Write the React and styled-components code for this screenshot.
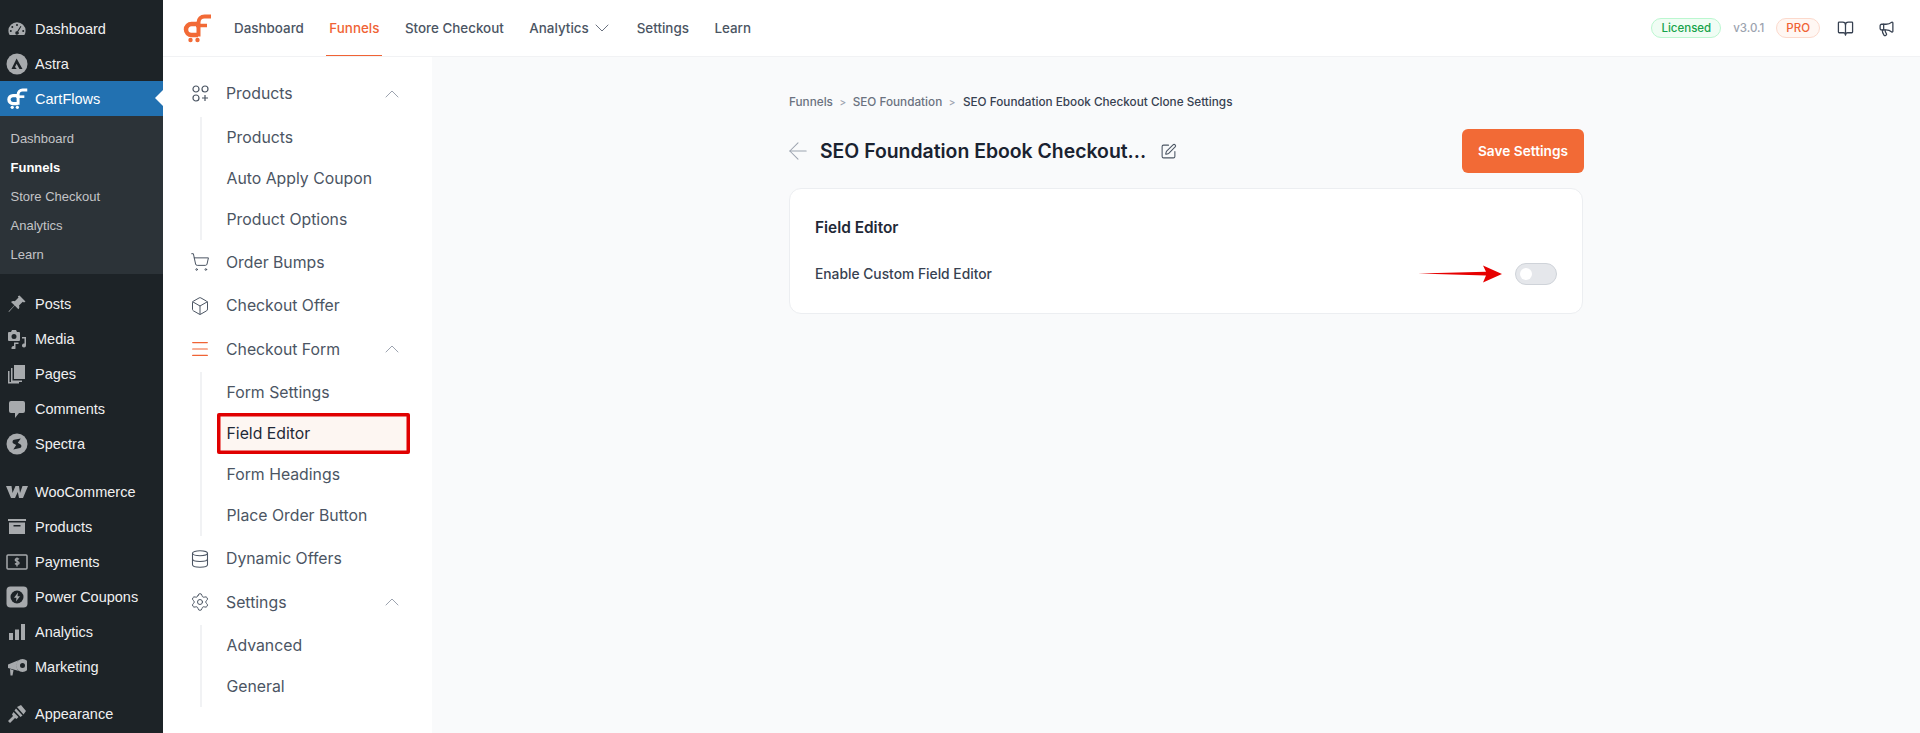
import React from 'react';
import styled, { createGlobalStyle } from 'styled-components';
import {
  ArrowLeft, BookOpen, Box, ChevronDown, ChevronUp, Database, Menu, Megaphone,
  Settings as SettingsIcon, ShoppingCart, SquarePen,
} from 'lucide-react';

const GlobalStyle = createGlobalStyle`
  html, body { margin: 0; padding: 0; height: 100%; background: #fff; }
  #root { height: 100%; }
  * { box-sizing: border-box; }
`;

const UI_FONT = `'Inter', 'Noto Sans', sans-serif`;

const Page = styled.div`
  display: flex;
  width: 1920px;
  height: 733px;
  overflow: hidden;
  font-family: ${UI_FONT};
`;

/* wp admin column */
const WpSidebar = styled.nav`
  flex: 0 0 163px;
  background: #1d2327;
  padding-top: 11px;
  font-family: 'Liberation Sans', Arial, sans-serif;
`;

const WpRow = styled.div`
  position: relative;
  display: flex;
  align-items: center;
  height: 35px;
  margin-top: ${(p) => (p.$gap ? '12.5px' : '0')};
  padding-left: 6px;
  gap: 7px;
  font-size: 14.5px;
  color: ${(p) => (p.$active ? '#fff' : '#f0f0f1')};
  background: ${(p) => (p.$active ? '#2271b1' : 'transparent')};

  &::after {
    content: ${(p) => (p.$active ? "''" : 'none')};
    position: absolute;
    right: 0;
    top: 9px;
    border: 8px solid transparent;
    border-right-color: #fff;
    border-left-width: 0;
  }
`;

const WpIconSlot = styled.span`
  display: flex;
  align-items: center;
  justify-content: center;
  width: 22px;
  height: 22px;
  color: ${(p) => (p.$active ? '#fff' : '#a7aaad')};
`;

const WpSubmenu = styled.div`
  background: #2c3338;
  padding: 8px 0 5px;
`;

const WpSubItem = styled.div`
  display: flex;
  align-items: center;
  height: 29px;
  padding-left: 10.5px;
  font-size: 13px;
  font-weight: ${(p) => (p.$current ? 700 : 400)};
  color: ${(p) => (p.$current ? '#fff' : '#c3c4c7')};
`;

/* plugin area */
const Main = styled.div`
  flex: 1;
  display: flex;
  flex-direction: column;
  min-width: 0;
`;

const TopBar = styled.header`
  display: flex;
  align-items: stretch;
  height: 57px;
  padding: 0 25px 0 19px;
  background: #fff;
  border-bottom: 1px solid #f1f2f4;
`;

const LogoLink = styled.a`
  display: flex;
  align-items: center;
  margin-right: 22px;
`;

const TopNav = styled.div`
  display: flex;
  gap: 25.5px;
`;

const TopLink = styled.a`
  display: flex;
  align-items: center;
  gap: 1px;
  padding: 0 ${(p) => (p.$active ? '3px' : '0')};
  margin: 0 ${(p) => (p.$active ? '-3px' : '0')};
  font-size: 13.4px;
  font-weight: 500;
  color: ${(p) => (p.$active ? '#f06335' : '#4b5563')};
  border-bottom: 1px solid ${(p) => (p.$active ? '#f06335' : 'transparent')};
`;

const NavCaret = styled.span`
  display: flex;
  margin-right: -2.5px;
  color: #6b7280;
`;

const TopRight = styled.div`
  display: flex;
  align-items: center;
  margin-left: auto;
`;

const Pill = styled.span`
  display: inline-flex;
  align-items: center;
  height: 20px;
  padding: 0 9px;
  border-radius: 10px;
  font-size: 11.5px;
  font-weight: 500;
  color: ${(p) => (p.$tone === 'green' ? '#16a34a' : '#f06335')};
  background: ${(p) => (p.$tone === 'green' ? '#f0fdf4' : '#fff7f3')};
  border: 1px solid ${(p) => (p.$tone === 'green' ? '#bbf7d0' : '#fcd9cc')};
`;

const Version = styled.span`
  margin: 0 12px;
  font-size: 11.5px;
  font-weight: 500;
  color: #9ca3af;
`;

const TopIcon = styled.span`
  display: flex;
  margin-left: ${(p) => p.$left || 0}px;
  color: #374151;
`;

const Body = styled.div`
  flex: 1;
  display: flex;
  min-height: 0;
`;

const SidePanel = styled.aside`
  flex: 0 0 269px;
  background: #fff;
  padding-top: 15px;
  padding-left: 29px;
`;

const TopItem = styled.div`
  display: flex;
  align-items: center;
  height: 43.5px;
  gap: 18px;
  font-size: 15.8px;
  color: #4b5563;
`;

const ItemIcon = styled.span`
  display: flex;
  justify-content: center;
  width: 16px;
  color: ${(p) => (p.$active ? '#f06335' : '#4b5563')};

  svg {
    flex: none;
  }
`;

const Caret = styled.span`
  display: flex;
  margin-left: auto;
  margin-right: 28px;
  color: #9ca3af;
`;

const SubList = styled.div`
  margin: 1px 0 1px 8px;
  padding-left: 16px;
  border-left: 2px solid #f1f2f4;
`;

const SubItem = styled.div`
  display: flex;
  align-items: center;
  height: 41px;
  margin-left: -1px;
  margin-right: 22px;
  padding-left: 9.5px;
  font-size: 15.8px;
  color: ${(p) => (p.$active ? '#1f2937' : '#4b5563')};
  background: ${(p) => (p.$active ? '#fdf6f2' : 'transparent')};
  box-shadow: ${(p) => (p.$active ? 'inset 0 0 0 3.5px #e00000' : 'none')};
  border-radius: 2px;
`;

const Content = styled.main`
  flex: 1;
  background: #f9fafb;
  padding: 37px 0 0 357px;
`;

const Column = styled.div`
  width: 795px;
`;

const Crumbs = styled.div`
  display: flex;
  align-items: center;
  height: 16px;
  font-size: 11.75px;
  font-weight: 500;
  color: #6b7280;
`;

const CrumbSep = styled.span`
  margin: 0 6.5px;
  color: #9ca3af;
  font-size: 10px;
`;

const CrumbCurrent = styled.span`
  margin-left: 1px;
  color: #374151;
`;

const HeadRow = styled.div`
  display: flex;
  align-items: center;
  height: 44px;
  margin-top: 19px;
`;

const BackArrow = styled.span`
  display: flex;
  margin-left: -5px;
  margin-right: 8px;
  color: #9ca3af;
`;

const Title = styled.h1`
  margin: 0;
  font-size: 19.4px;
  font-weight: 600;
  color: #1a2230;
`;

const EditPen = styled.span`
  display: flex;
  margin-left: 14px;
  color: #4b5563;
`;

const SaveButton = styled.button`
  margin-left: auto;
  width: 122px;
  height: 44px;
  border: 0;
  border-radius: 6px;
  background: #f26a36;
  color: #fff;
  font-family: inherit;
  font-size: 13.7px;
  font-weight: 600;
`;

const Card = styled.section`
  height: 126px;
  margin-top: 15px;
  margin-right: 1px;
  padding: 27px 25px 0;
  background: #fff;
  border: 1px solid #eceef1;
  border-radius: 12px;
`;

const CardTitle = styled.h2`
  margin: 0;
  height: 24px;
  line-height: 24px;
  font-size: 15.4px;
  font-weight: 600;
  color: #1f2937;
`;

const FieldRow = styled.div`
  display: flex;
  align-items: center;
  justify-content: space-between;
  margin-top: 22px;
  height: 24px;
  font-size: 13.8px;
  font-weight: 500;
  color: #374151;
`;

const ToggleWrap = styled.div`
  position: relative;
  display: flex;
`;

const Toggle = styled.span`
  display: flex;
  align-items: center;
  width: 42px;
  height: 22px;
  padding: 0 4px;
  border-radius: 11px;
  background: #e5e7eb;
  border: 1px solid #cfd3d9;
`;

const Knob = styled.span`
  width: 12px;
  height: 12px;
  border-radius: 50%;
  background: #fff;
`;

const AnnotationArrow = styled.svg`
  position: absolute;
  right: 52px;
  top: 0;
`;

const CartFlowsMark = ({ size = 30, color = '#f26a36' }) => (
  <svg width={size} height={size} viewBox="0 0 30 30" fill="none">
    <path d="M15 11H9.500a5.500 5.500 0 0 0 0 11H16" stroke={color} strokeWidth="4.500" />
    <path d="M16.500 23.500V9.500a6 6 0 0 1 6-6H29" stroke={color} strokeWidth="4" />
    <path d="M14 12.500h11" stroke={color} strokeWidth="3.500" />
    <circle cx="8.500" cy="27" r="2.200" fill={color} />
    <circle cx="15.500" cy="27" r="2.200" fill={color} />
  </svg>
);

const wpIcons = {
  dashboard: (
    <svg width="20" height="20" viewBox="0 0 20 20" fill="currentColor">
      <path d="M10 3.200a8.600 8.600 0 0 0-8.600 8.600c0 1.600.4 3 1.200 4.300h14.800a8.500 8.500 0 0 0 1.200-4.300A8.600 8.600 0 0 0 10 3.200zM10 5a1 1 0 1 1 0 2 1 1 0 0 1 0-2zM5.300 7a1 1 0 1 1 0 2 1 1 0 0 1 0-2zM3.800 11a1 1 0 1 1 0 2 1 1 0 0 1 0-2zm12.400 0a1 1 0 1 1 0 2 1 1 0 0 1 0-2zM13.500 7l.9.5-3.200 5.300a1.700 1.700 0 1 1-1-.5z" fillRule="evenodd" />
    </svg>
  ),
  astra: (
    <svg width="22" height="22" viewBox="0 0 22 22">
      <circle cx="11" cy="11" r="10.500" fill="currentColor" />
      <path d="M5.500 16 10.600 5.500 16.500 16h-3l-2.900-5.200L9 14l1.800 2z" fill="#1d2327" />
    </svg>
  ),
  posts: (
    <svg width="20" height="20" viewBox="0 0 20 20" fill="currentColor">
      <path d="M12.500 1.500 18.500 7.500 17 8.500 15.800 7.800 12 11.500c.6 1.400.4 2.800-.6 3.800L7.700 11.600 2 18l-.5-.5 5.900-6.200L4 8c1-1 2.400-1.300 3.800-.7l3.700-3.800-.7-1.200z" />
    </svg>
  ),
  media: (
    <svg width="20" height="20" viewBox="0 0 20 20" fill="currentColor">
      <path d="M2 3h2l1-2h4l1 2h2a1 1 0 0 1 1 1v7a1 1 0 0 1-1 1H2a1 1 0 0 1-1-1V4a1 1 0 0 1 1-1zm5 2a2.500 2.500 0 1 0 0 5 2.500 2.500 0 0 0 0-5z" fillRule="evenodd" />
      <path d="M19 8v8.500a2 2 0 1 1-1.500-1.900V9.500H15V8zM7 13.500v3.500a2 2 0 1 0 1.500 1.900V15h3v-1.500z" />
    </svg>
  ),
  pages: (
    <svg width="20" height="20" viewBox="0 0 20 20" fill="currentColor">
      <path d="M7 1h11v14H7z" />
      <path d="M4 4h1.500v12.500H15V18H4z" />
      <path d="M1 7h1.500v11H12v1.500H1z" />
    </svg>
  ),
  comments: (
    <svg width="20" height="20" viewBox="0 0 20 20" fill="currentColor">
      <path d="M4 2h12a2 2 0 0 1 2 2v8a2 2 0 0 1-2 2h-4l-4 5v-5H4a2 2 0 0 1-2-2V4a2 2 0 0 1 2-2z" />
    </svg>
  ),
  spectra: (
    <svg width="22" height="22" viewBox="0 0 22 22">
      <circle cx="11" cy="11" r="10.500" fill="currentColor" />
      <path d="M14.800 5.500 8 6.800a2 2 0 0 0-.6 3.600l2.800 1.600-2.900 4.500 6.700-1.500a2 2 0 0 0 .6-3.500l-2.800-1.700z" fill="#1d2327" />
    </svg>
  ),
  woo: (
    <svg width="22" height="16" viewBox="0 0 22 16" fill="currentColor">
      <path d="M0 2h5.500l1 7 3-7h3.500l1 7 2.500-7H22l-5 12h-4l-1.200-6-2.800 6H5z" />
    </svg>
  ),
  products: (
    <svg width="20" height="20" viewBox="0 0 20 20" fill="currentColor">
      <path d="M1 2h18v2H1zM2 5.500h16V17H2zm4.500 2.500v1.500h7V8z" fillRule="evenodd" />
    </svg>
  ),
  payments: (
    <svg width="22" height="16" viewBox="0 0 22 16" fill="none" stroke="currentColor" strokeWidth="1.500">
      <rect x="1" y="1" width="20" height="14" rx="1" />
      <path d="M13 5.200c-.8-.8-3.800-1-3.800.7 0 1.900 3.900 1 3.900 3 0 1.700-3.200 1.500-4.100.6M11 3.500v9" strokeWidth="1.300" />
    </svg>
  ),
  coupons: (
    <svg width="22" height="22" viewBox="0 0 22 22">
      <rect x="0.500" y="0.500" width="21" height="21" rx="4" fill="currentColor" />
      <circle cx="11" cy="11" r="6.500" fill="#1d2327" />
      <path d="M12 6.500 8 11.800h2.500L10 15.500l4-5.300h-2.500z" fill="currentColor" />
    </svg>
  ),
  analytics: (
    <svg width="20" height="20" viewBox="0 0 20 20" fill="currentColor">
      <path d="M2 11h4v7H2zM8 7.500h4V18H8zM14 2h4v16h-4z" />
    </svg>
  ),
  marketing: (
    <svg width="20" height="20" viewBox="0 0 20 20" fill="currentColor">
      <path d="M1 7.500 12 3a7 7 0 0 0 0 11L1 11zM3 12l3.500 1.200-1 5.300H3.500z" />
      <path d="M15.500 2a6.500 6.500 0 1 0 0 13 6.500 6.500 0 0 0 0-13zm0 4a2.500 2.500 0 1 1 0 5 2.500 2.500 0 0 1 0-5z" fillRule="evenodd" />
    </svg>
  ),
  appearance: (
    <svg width="20" height="20" viewBox="0 0 20 20" fill="currentColor">
      <path d="M10 3 14 1l5 6-2.500 3.500zM9 4.500l6.500 7-2 1.500L7.500 6.500zM6.500 8l5 5-2 2-1.500-1-5 5-2-2 5-5-1-1.500z" />
    </svg>
  ),
};

const wpBefore = [
  { key: 'dashboard', label: 'Dashboard' },
  { key: 'astra', label: 'Astra' },
];

const wpSub = ['Dashboard', 'Funnels', 'Store Checkout', 'Analytics', 'Learn'];

const wpAfter = [
  { key: 'posts', label: 'Posts', gap: true },
  { key: 'media', label: 'Media' },
  { key: 'pages', label: 'Pages' },
  { key: 'comments', label: 'Comments' },
  { key: 'spectra', label: 'Spectra' },
  { key: 'woo', label: 'WooCommerce', gap: true },
  { key: 'products', label: 'Products' },
  { key: 'payments', label: 'Payments' },
  { key: 'coupons', label: 'Power Coupons' },
  { key: 'analytics', label: 'Analytics' },
  { key: 'marketing', label: 'Marketing' },
  { key: 'appearance', label: 'Appearance', gap: true },
];

function WpMenuRow({ item }) {
  return (
    <WpRow $gap={item.gap}>
      <WpIconSlot>{wpIcons[item.key]}</WpIconSlot>
      {item.label}
    </WpRow>
  );
}

const ProductsGlyph = () => (
  <svg width="17" height="17" viewBox="0 0 17 17" fill="none" stroke="currentColor" strokeWidth="1.200">
    <circle cx="4" cy="4" r="3" />
    <circle cx="13" cy="4" r="3" />
    <circle cx="4" cy="13" r="3" />
    <path d="M13 10v6M10 13h6" />
  </svg>
);

function PanelGroup({ icon, label, active, items, open }) {
  return (
    <>
      <TopItem>
        <ItemIcon $active={active}>{icon}</ItemIcon>
        {label}
        {open && <Caret><ChevronUp size={24} strokeWidth={1} /></Caret>}
      </TopItem>
      {open && (
        <SubList>
          {items.map((it) => (
            <SubItem key={it} $active={it === 'Field Editor'}>{it}</SubItem>
          ))}
        </SubList>
      )}
    </>
  );
}

export default function App() {
  return (
    <Page>
      <GlobalStyle />
      <WpSidebar>
        {wpBefore.map((item) => <WpMenuRow key={item.key} item={item} />)}
        <WpRow $active>
          <WpIconSlot $active><CartFlowsMark size={23} color="#fff" /></WpIconSlot>
          CartFlows
        </WpRow>
        <WpSubmenu>
          {wpSub.map((s) => <WpSubItem key={s} $current={s === 'Funnels'}>{s}</WpSubItem>)}
        </WpSubmenu>
        {wpAfter.map((item) => <WpMenuRow key={item.key} item={item} />)}
      </WpSidebar>

      <Main>
        <TopBar>
          <LogoLink><CartFlowsMark /></LogoLink>
          <TopNav>
            <TopLink>Dashboard</TopLink>
            <TopLink $active>Funnels</TopLink>
            <TopLink>Store Checkout</TopLink>
            <TopLink>Analytics <NavCaret><ChevronDown size={24} strokeWidth={1} /></NavCaret></TopLink>
            <TopLink>Settings</TopLink>
            <TopLink>Learn</TopLink>
          </TopNav>
          <TopRight>
            <Pill $tone="green">Licensed</Pill>
            <Version>v3.0.1</Version>
            <Pill>PRO</Pill>
            <TopIcon $left={17}><BookOpen size={17} strokeWidth={1.8} /></TopIcon>
            <TopIcon $left={24}><Megaphone size={17} strokeWidth={1.8} /></TopIcon>
          </TopRight>
        </TopBar>

        <Body>
          <SidePanel>
            <PanelGroup
              icon={<ProductsGlyph />}
              label="Products"
              open
              items={['Products', 'Auto Apply Coupon', 'Product Options']}
            />
            <PanelGroup icon={<ShoppingCart size={20} strokeWidth={1.2} />} label="Order Bumps" />
            <PanelGroup icon={<Box size={20} strokeWidth={1.2} />} label="Checkout Offer" />
            <PanelGroup
              icon={<Menu size={22} strokeWidth={1.3} />}
              label="Checkout Form"
              active
              open
              items={['Form Settings', 'Field Editor', 'Form Headings', 'Place Order Button']}
            />
            <PanelGroup icon={<Database size={20} strokeWidth={1.3} />} label="Dynamic Offers" />
            <PanelGroup
              icon={<SettingsIcon size={20} strokeWidth={1.2} />}
              label="Settings"
              open
              items={['Advanced', 'General']}
            />
          </SidePanel>

          <Content>
            <Column>
              <Crumbs>
                Funnels<CrumbSep>&gt;</CrumbSep>SEO Foundation<CrumbSep>&gt;</CrumbSep>
                <CrumbCurrent>SEO Foundation Ebook Checkout Clone Settings</CrumbCurrent>
              </Crumbs>
              <HeadRow>
                <BackArrow><ArrowLeft size={28} strokeWidth={0.9} /></BackArrow>
                <Title>SEO Foundation Ebook Checkout...</Title>
                <EditPen><SquarePen size={17} strokeWidth={1.5} /></EditPen>
                <SaveButton>Save Settings</SaveButton>
              </HeadRow>
              <Card>
                <CardTitle>Field Editor</CardTitle>
                <FieldRow>
                  Enable Custom Field Editor
                  <ToggleWrap>
                    <AnnotationArrow width="87" height="22" viewBox="0 0 87 22">
                      <path d="M0 10.500 68 8.800 65 2.500 84 11 65 19.500 68 12.500z" fill="#e60000" />
                    </AnnotationArrow>
                    <Toggle><Knob /></Toggle>
                  </ToggleWrap>
                </FieldRow>
              </Card>
            </Column>
          </Content>
        </Body>
      </Main>
    </Page>
  );
}
